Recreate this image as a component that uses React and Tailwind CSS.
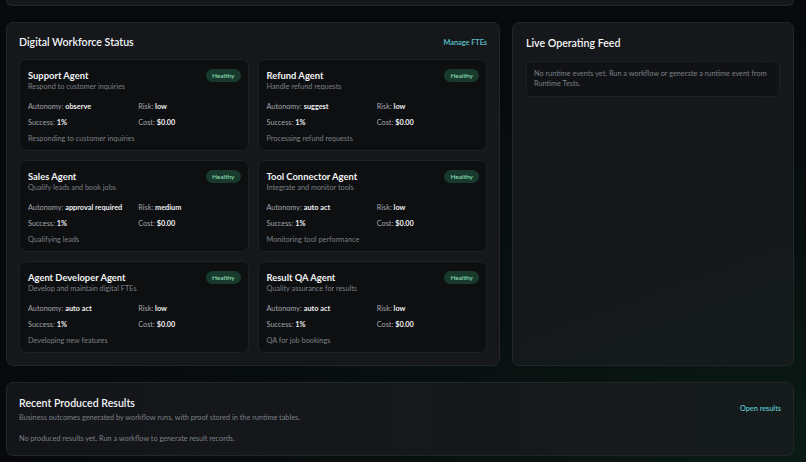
import React from 'react';

const agents = [
    { name: 'Support Agent', desc: 'Respond to customer inquiries', autonomy: 'observe', risk: 'low', status: 'Responding to customer inquiries' },
    { name: 'Refund Agent', desc: 'Handle refund requests', autonomy: 'suggest', risk: 'low', status: 'Processing refund requests' },
    { name: 'Sales Agent', desc: 'Qualify leads and book jobs', autonomy: 'approval required', risk: 'medium', status: 'Qualifying leads' },
    { name: 'Tool Connector Agent', desc: 'Integrate and monitor tools', autonomy: 'auto act', risk: 'low', status: 'Monitoring tool performance' },
    { name: 'Agent Developer Agent', desc: 'Develop and maintain digital FTEs', autonomy: 'auto act', risk: 'low', status: 'Developing new features' },
    { name: 'Result QA Agent', desc: 'Quality assurance for results', autonomy: 'auto act', risk: 'low', status: 'QA for job bookings' },
];

function AgentCard({ agent }) {
    return (
        <div className="bg-[#0e0f11] border border-[#1d2024] rounded-[7px] pl-[8px] pr-[7px] pt-[10px] pb-[6px]">
            <div className="flex justify-between items-start">
                <div>
                    <div className="text-[9.4px] leading-[12px] font-bold text-[#f1f3f5]">{agent.name}</div>
                    <div className="text-[7.3px] leading-[10px] text-[#7b8086]">{agent.desc}</div>
                </div>
                <span className="-mt-[1px] bg-[#173a2d] text-[#8adbb0] text-[6.5px] leading-[13px] h-[13px] px-[6px] rounded-full font-semibold">
                    Healthy
                </span>
            </div>
            <div className="grid grid-cols-2 gap-x-2 gap-y-[6px] mt-[10px] text-[7.3px] leading-[10px] text-[#a2a6ac]">
                <div>Autonomy: <span className="font-bold text-[#eef0f2]">{agent.autonomy}</span></div>
                <div>Risk: <span className="font-bold text-[#eef0f2]">{agent.risk}</span></div>
                <div>Success: <span className="font-bold text-[#eef0f2]">1%</span></div>
                <div>Cost: <span className="font-bold text-[#eef0f2]">$0.00</span></div>
            </div>
            <div className="mt-[6px] text-[7.3px] leading-[10px] text-[#7b8086]">{agent.status}</div>
        </div>
    );
}

function App() {
    return (
        <div className="min-h-[462px] font-['Lato',sans-serif] bg-[radial-gradient(ellipse_at_100%_100%,#0b1c15_0%,#08100f_35%,#07090d_70%)] pl-[6px] pr-[12px] overflow-hidden">
            {/* tail end of the panel above */}
            <div className="h-[6px] bg-[#14171c] border border-t-0 border-[#22262c] rounded-b-[6px]" />

            <div className="flex gap-[12px] mt-[16px]">
                <section className="w-[494px] bg-[#15171b] border border-[#22262b] rounded-[7px] px-[12px] pt-[13px] pb-[12px]">
                    <div className="flex justify-between items-center h-[14px] mb-[9px]">
                        <h2 className="text-[10.6px] font-semibold text-[#f2f4f6]">Digital Workforce Status</h2>
                        <span className="text-[7.3px] font-semibold text-[#5cc4cf]">Manage FTEs</span>
                    </div>
                    <div className="grid grid-cols-2 gap-[9px]">
                        {agents.map((a) => (
                            <AgentCard key={a.name} agent={a} />
                        ))}
                    </div>
                </section>

                <section className="flex-1 bg-[linear-gradient(160deg,#16171b_0%,#15181b_60%,#141b1a_100%)] border border-[#22262b] rounded-[7px] px-[13px] pt-[13px]">
                    <h2 className="text-[10.6px] leading-[14px] font-semibold text-[#f2f4f6] mb-[11px]">Live Operating Feed</h2>
                    <div className="bg-[#111215] border border-[#1d2024] rounded-[5px] px-[7px] py-[7px] text-[7.3px] leading-[10px] text-[#7b8086]">
                        No runtime events yet. Run a workflow or generate a runtime event from Runtime Tests.
                    </div>
                </section>
            </div>

            <section className="mt-[16px] bg-[linear-gradient(90deg,#141519_0%,#16181c_50%,#151b1a_100%)] border border-[#22262b] rounded-[7px] px-[12px] pt-[13px] pb-[11px]">
                <div className="flex justify-between items-center">
                    <div>
                        <h2 className="text-[10.6px] leading-[14px] font-semibold text-[#f2f4f6]">Recent Produced Results</h2>
                        <p className="mt-[3px] text-[7.3px] leading-[10px] text-[#7b8086]">
                            Business outcomes generated by workflow runs, with proof stored in the runtime tables.
                        </p>
                    </div>
                    <span className="text-[7.3px] font-semibold text-[#5cc4cf]">Open results</span>
                </div>
                <p className="mt-[11px] text-[7.3px] leading-[10px] text-[#7b8086]">
                    No produced results yet. Run a workflow to generate result records.
                </p>
            </section>
        </div>
    );
}

export default App;
